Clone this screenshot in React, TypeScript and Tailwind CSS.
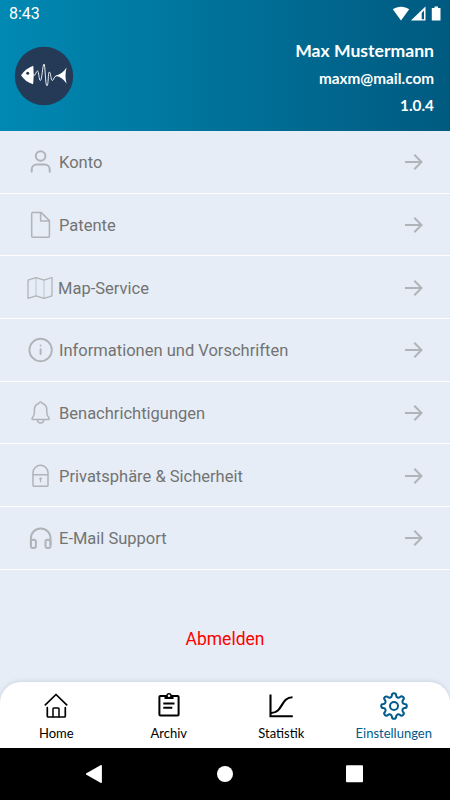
import React from 'react';

const iconProps = {
  width: 28,
  height: 28,
  viewBox: '0 0 28 28',
  fill: 'none',
  stroke: 'currentColor',
  strokeLinecap: 'round',
  strokeLinejoin: 'round',
} as const;

function UserIcon() {
  return (
    <svg {...iconProps} strokeWidth="2">
      <circle cx="14.6" cy="8" r="4.8" />
      <path d="M5.7 23.8v-2.2a5 5 0 0 1 5-5h8a5 5 0 0 1 5 5v2.2" />
    </svg>
  );
}

function FileIcon() {
  return (
    <svg {...iconProps} strokeWidth="1.5">
      <path d="M6.7 1.6h8.6l8.1 8v15.6a1 1 0 0 1-1 1H6.7a1 1 0 0 1-1-1V2.6a1 1 0 0 1 1-1z" />
      <path d="M14.6 1.8v8.3h8.7" />
    </svg>
  );
}

function MapIcon() {
  return (
    <svg {...iconProps} strokeWidth="1.3">
      <path d="M2 6.2 10 3.7l8 2.5 8-2.7v18.3l-8 2.5-8-2.5-8 2.5z" />
      <path d="M10 3.7v18M18 6.2v18" strokeWidth=".7" />
    </svg>
  );
}

function InfoIcon() {
  return (
    <svg {...iconProps} strokeWidth="1.9">
      <circle cx="14.6" cy="14" r="11.2" />
      <path d="M14.6 13.3v4.7" />
      <path d="M14.6 9.4v.1" />
    </svg>
  );
}

function BellIcon() {
  return (
    <svg {...iconProps} strokeWidth="1.5">
      <path d="M14.6 3c-1.200 0-1.600.8-1.900 1.500-2.800.9-4.300 3-4.300 6v3c0 2.600-.7 3.600-1.800 4.900-.8 1-.9 2.200.4 2.200h15.200c1.300 0 1.200-1.200.4-2.200-1.100-1.300-1.800-2.300-1.800-4.900v-3c0-3-1.500-5.100-4.300-6C16.200 3.800 15.800 3 14.600 3z" />
      <path d="M11.400 21c.2 2 1.500 3 3.200 3s3-1 3.200-3" />
    </svg>
  );
}

function LockIcon() {
  return (
    <svg {...iconProps} strokeWidth="1.5">
      <path d="M7 12.800v-2a7.500 7.500 0 0 1 15 0v12.700a.7.700 0 0 1-.7.700H7.700a.7.700 0 0 1-.7-.7zh15" />
      <circle cx="14.5" cy="16.600" r=".9" fill="currentColor" strokeWidth=".8" />
      <path d="M14.500 17.500v2.300" strokeWidth="1.200" />
    </svg>
  );
}

function HeadphonesIcon() {
  return (
    <svg {...iconProps} strokeWidth="2">
      <path d="M4.900 20.500v-6.300a9.800 9.800 0 0 1 19.600 0v6.300" />
      <rect x="4.900" y="15.800" width="5" height="8.200" rx="2" />
      <rect x="19.500" y="15.800" width="5" height="8.200" rx="2" />
    </svg>
  );
}

function ArrowIcon() {
  return (
    <svg {...iconProps} width="20" height="20" viewBox="0 0 20 20" strokeWidth="2" strokeLinecap="butt" strokeLinejoin="miter">
      <path d="M1 10h17M10.300 2.800 17.500 10l-7.200 7.200" />
    </svg>
  );
}

function FishLogo() {
  return (
    <svg width="60" height="60" viewBox="0 0 60 60">
      <circle cx="30" cy="30" r="29.200" fill="#243a56" />
      <path d="M7 29.300c3-4.500 7-7.600 12.200-9.500.4 2.700.2 4.500.6 9.200-.4 4-.2 6.500-.8 9.300-5-1.500-9-4.500-12-9z" fill="#fff" />
      <circle cx="13.700" cy="27.300" r="1.500" fill="#243a56" />
      <path
        d="M19.500 29.700c2.300 0 2.500-4.700 4-4.700s1.300 9.500 2.900 9.500S28.700 18 30 18s1.200 21.800 2.900 21.800 1-13.800 2.500-13.800 1.300 8.500 2.900 8.500 1.500-4.700 4.500-4.700"
        fill="none"
        stroke="#e8edf2"
        strokeWidth="1"
      />
      <path d="M41.500 29.700c5-1 8.200-4 11.100-8.200-1.400 5.500-1.500 10.500 0 16.200-2.800-4.200-6-7-11.100-8z" fill="#fff" />
    </svg>
  );
}

function HomeIcon() {
  return (
    <svg {...iconProps} strokeWidth="1.700">
      <path d="M3.300 12.800 14 2.500l10.700 10.300" />
      <path d="M5.300 15.700v8.300a1 1 0 0 0 1 1h16a1 1 0 0 0 1-1v-8.300" />
      <path d="M11 24.800v-8a.8.800 0 0 1 .8-.8h4.400a.8.800 0 0 1 .8.800v8" strokeWidth="1.500" />
    </svg>
  );
}

function ClipboardIcon() {
  return (
    <svg {...iconProps} strokeWidth="2">
      <path d="M5.400 4h17.200a1 1 0 0 1 1 1v17.400a1 1 0 0 1-1 1H5.400a1 1 0 0 1-1-1V5a1 1 0 0 1 1-1z" />
      <path d="M9.500 3.500h9v3.500h-9z" fill="currentColor" stroke="none" />
      <circle cx="14" cy="3.800" r="2" fill="#fff" strokeWidth="1.400" />
      <path d="M8.300 11.500h11.200M8.300 15.700h9" strokeLinecap="butt" strokeWidth="1.900" />
    </svg>
  );
}

function ChartIcon() {
  return (
    <svg {...iconProps} strokeWidth="2.100" strokeLinecap="butt" strokeLinejoin="miter">
      <path d="M3.500 2.500v21.700h22.300" />
      <path d="M4 21c12.300 0 9.300-15.700 21.500-15.700" />
    </svg>
  );
}

function GearIcon() {
  return (
    <svg {...iconProps} strokeWidth="2">
      <path d="M11.900 3.300a2.100 2.100 0 0 1 4.200 0c.2 2.200 2.300 3.100 4 1.700a2.100 2.100 0 0 1 3 3c-1.400 1.700-.6 3.700 1.600 3.900a2.100 2.100 0 0 1 0 4.200c-2.200.2-3 2.200-1.600 3.900a2.100 2.100 0 0 1-3 3c-1.700-1.400-3.800-.5-4 1.700a2.100 2.100 0 0 1-4.200 0c-.2-2.200-2.300-3.100-4-1.700a2.100 2.100 0 0 1-3-3c1.400-1.700.6-3.700-1.600-3.900a2.100 2.100 0 0 1 0-4.200c2.200-.2 3-2.200 1.600-3.900a2.100 2.100 0 0 1 3-3c1.700 1.400 3.800.5 4-1.700z" />
      <circle cx="14" cy="14" r="4" />
    </svg>
  );
}

const menuItems = [
  { label: 'Konto', icon: UserIcon },
  { label: 'Patente', icon: FileIcon },
  { label: 'Map-Service', icon: MapIcon },
  { label: 'Informationen und Vorschriften', icon: InfoIcon },
  { label: 'Benachrichtigungen', icon: BellIcon },
  { label: 'Privatsphäre & Sicherheit', icon: LockIcon },
  { label: 'E-Mail Support', icon: HeadphonesIcon },
];

const tabs = [
  { label: 'Home', icon: HomeIcon },
  { label: 'Archiv', icon: ClipboardIcon },
  { label: 'Statistik', icon: ChartIcon },
  { label: 'Einstellungen', icon: GearIcon, active: true },
];

function StatusBar() {
  return (
    <div className="flex h-[27px] items-center justify-between pl-[9px] pr-2 text-[16px] text-white">
      <span>8:43</span>
      <svg width="50" height="16" viewBox="0 0 50 16" fill="#fff">
        <path d="M.8 3.200C5.500-.2 12.500-.2 17.200 3.200L9 14.500z" />
        <path d="M33.500.5v14H18.900zM29.700 7v6.200h2.300V4.500z" fillRule="evenodd" />
        <path d="M42.500.5h3.500v1.500h2.500v12.500h-8.700V2H42.500z" />
      </svg>
    </div>
  );
}

function Header() {
  return (
    <header className="h-[131px] bg-linear-to-r from-[#0089b3] to-[#005a80]">
      <StatusBar />
      <div className="flex justify-between pl-[14px] pr-4">
        <div className="pt-[19px]">
          <FishLogo />
        </div>
        <div className="flex flex-col items-end pt-[10px] font-['Lato',sans-serif] font-bold text-white">
          <div className="text-[17.6px] leading-[27px]">Max Mustermann</div>
          <div className="text-[15.3px] leading-[28px]">maxm@mail.com</div>
          <div className="text-[15.3px] leading-[26px]">1.0.4</div>
        </div>
      </div>
    </header>
  );
}

export default function App() {
  return (
    <div className="flex h-[800px] w-[450px] flex-col overflow-hidden bg-[#e6edf6] font-['Roboto',sans-serif]">
      <Header />

      {/* Settings menu */}
      <ul>
        {menuItems.map(({ label, icon: Icon }) => (
          <li
            key={label}
            className="flex h-[62.67px] items-center border-b-[1.5px] border-white px-[26px] pt-px text-[#b0b4b9]"
          >
            <Icon />
            <span
              className={`flex-1 pt-[3px] text-[16.5px] text-[#737373] ${label === 'Map-Service' ? 'pl-1' : 'pl-[5px]'}`}
            >
              {label}
            </span>
            <ArrowIcon />
          </li>
        ))}
      </ul>

      <div className="flex flex-1 items-center justify-center pt-[26px]">
        <button className="text-[17.5px] text-[#ff0000]">Abmelden</button>
      </div>

      {/* Bottom tabs */}
      <nav className="grid h-[66px] grid-cols-4 rounded-t-[21px] bg-white pt-[10px] shadow-[0_-1px_4px_rgba(60,80,110,0.15)]">
        {tabs.map(({ label, icon: Icon, active }) => (
          <div key={label} className={`flex flex-col items-center ${active ? 'text-[#005b8c]' : 'text-black'}`}>
            <Icon />
            <span className="font-['Lato',sans-serif] text-[13px] leading-[27px]">{label}</span>
          </div>
        ))}
      </nav>

      {/* Android navigation */}
      <div className="h-[52px] bg-black">
        <svg width="450" height="52" viewBox="0 0 450 52" fill="#fff">
          <path d="M86 25.500 100.500 17.300a1 1 0 0 1 1.400 1v15.400a1 1 0 0 1-1.400 1L86 26.500z" />
          <circle cx="225" cy="26" r="8" />
          <rect x="346" y="17.300" width="17" height="17" rx="1" />
        </svg>
      </div>
    </div>
  );
}
